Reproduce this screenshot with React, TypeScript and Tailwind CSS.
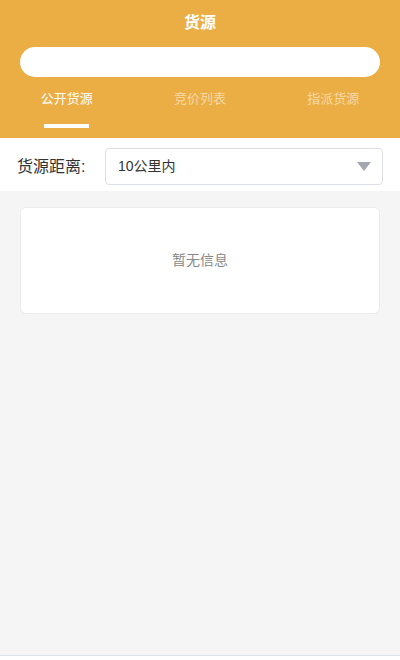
import { useState } from "react";

const tabs = ["公开货源", "竞价列表", "指派货源"];

export default function App() {
  const [active, setActive] = useState(0);

  return (
    <div
      className="flex h-[660px] w-[400px] flex-col bg-white"
      style={{ fontFamily: '"Liberation Sans", "Noto Sans CJK SC", sans-serif' }}
    >
      {/* 顶部 */}
      <header className="bg-[#ebae45] px-5 pt-[12px]">
        <h1 className="text-center text-[16px] font-bold leading-[22px] text-white">货源</h1>
        <div className="mt-[13px] h-[30px] rounded-full bg-white" />
        <nav className="-mx-5 mt-[12px] grid grid-cols-3">
          {tabs.map((t, i) => (
            <button
              key={t}
              onClick={() => setActive(i)}
              className={[
                "flex flex-col items-center text-[13px] leading-[20px]",
                i === active ? "text-white" : "text-[#f6d9a6]",
              ].join(" ")}
            >
              <span>{t}</span>
              <span className={["mt-[15px] h-[4px] w-[45px]", i === active ? "bg-white" : "bg-transparent"].join(" ")} />
            </button>
          ))}
        </nav>
        <div className="h-[10px]" />
      </header>

      {/* 筛选 */}
      <div className="flex items-center pb-[6px] pl-[17px] pr-[17px] pt-[10px]">
        <span className="w-[88px] text-[16px] text-[#333]">货源距离:</span>
        <div className="flex h-[37px] flex-1 items-center justify-between rounded-[4px] border border-[#dcdfe6] pl-[12px] pr-[11px]">
          <span className="text-[14px] text-[#333]">10公里内</span>
          <svg width="14" height="9" viewBox="0 0 14 9">
            <path d="M0 0 H14 L7 9 Z" fill="#a3a7ae" />
          </svg>
        </div>
      </div>

      {/* 列表 */}
      <main className="flex-1 border-b border-[#dde2ea] bg-[#f5f5f5] px-5 pt-[16px]">
        <div className="flex h-[107px] items-center justify-center rounded-[6px] border border-[#ebebeb] bg-white">
          <span className="text-[14px] text-[#888]">暂无信息</span>
        </div>
      </main>
      <div className="h-[4px] bg-white" />
    </div>
  );
}
